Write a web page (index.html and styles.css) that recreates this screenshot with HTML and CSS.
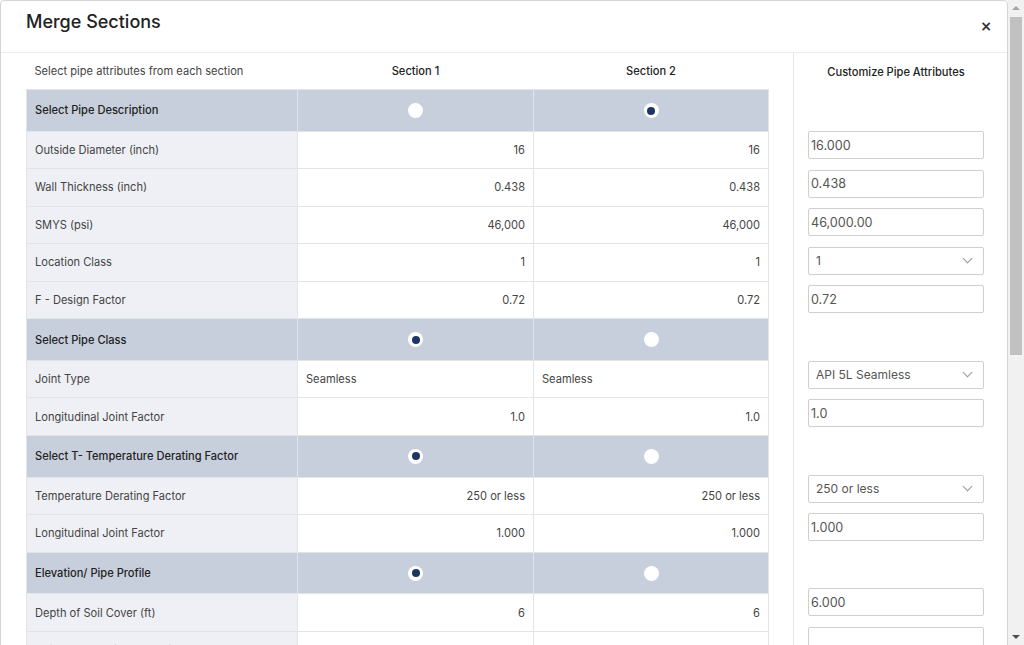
FILE: index.html
```html
<!DOCTYPE html>
<html lang="en">

<head>
    <meta charset="UTF-8">
    <meta name="viewport" content="width=device-width, initial-scale=1.0">
    <title>Merge Sections</title>
    <link rel="stylesheet" href="styles.css">
</head>

<body>

    <div class="modal">
        <div class="modal-header">
            <h2>Merge Sections</h2>
            <span class="close-modal">&times;</span>
        </div>

        <div class="modal-body">
            <div class="sections">
                <table class="merge-table">
                    <thead>
                        <tr>
                            <th class="caption">Select pipe attributes from each section</th>
                            <th class="sec">Section 1</th>
                            <th>Section 2</th>
                        </tr>
                    </thead>
                    <tbody>
                        <tr class="group">
                            <td>Select Pipe Description</td>
                            <td><span class="radio"></span></td>
                            <td><span class="radio checked"></span></td>
                        </tr>
                        <tr>
                            <td>Outside Diameter (inch)</td>
                            <td class="num">16</td>
                            <td class="num">16</td>
                        </tr>
                        <tr>
                            <td>Wall Thickness (inch)</td>
                            <td class="num">0.438</td>
                            <td class="num">0.438</td>
                        </tr>
                        <tr>
                            <td>SMYS (psi)</td>
                            <td class="num">46,000</td>
                            <td class="num">46,000</td>
                        </tr>
                        <tr>
                            <td>Location Class</td>
                            <td class="num">1</td>
                            <td class="num">1</td>
                        </tr>
                        <tr>
                            <td>F - Design Factor</td>
                            <td class="num">0.72</td>
                            <td class="num">0.72</td>
                        </tr>
                        <tr class="group">
                            <td>Select Pipe Class</td>
                            <td><span class="radio checked"></span></td>
                            <td><span class="radio"></span></td>
                        </tr>
                        <tr>
                            <td>Joint Type</td>
                            <td>Seamless</td>
                            <td>Seamless</td>
                        </tr>
                        <tr>
                            <td>Longitudinal Joint Factor</td>
                            <td class="num">1.0</td>
                            <td class="num">1.0</td>
                        </tr>
                        <tr class="group">
                            <td>Select T- Temperature Derating Factor</td>
                            <td><span class="radio checked"></span></td>
                            <td><span class="radio"></span></td>
                        </tr>
                        <tr>
                            <td>Temperature Derating Factor</td>
                            <td class="num">250 or less</td>
                            <td class="num">250 or less</td>
                        </tr>
                        <tr>
                            <td>Longitudinal Joint Factor</td>
                            <td class="num">1.000</td>
                            <td class="num">1.000</td>
                        </tr>
                        <tr class="group">
                            <td>Elevation/ Pipe Profile</td>
                            <td><span class="radio checked"></span></td>
                            <td><span class="radio"></span></td>
                        </tr>
                        <tr>
                            <td>Depth of Soil Cover (ft)</td>
                            <td class="num">6</td>
                            <td class="num">6</td>
                        </tr>
                        <tr>
                            <td>Height of Terrain above Pipe Center (ft)</td>
                            <td class="num">0</td>
                            <td class="num">0</td>
                        </tr>
                        <tr>
                            <td>Elevation Change (ft)</td>
                            <td class="num">0</td>
                            <td class="num">0</td>
                        </tr>
                        <tr class="group">
                            <td>Select Coating</td>
                            <td><span class="radio checked"></span></td>
                            <td><span class="radio"></span></td>
                        </tr>
                        <tr>
                            <td>Coating Type</td>
                            <td>FBE</td>
                            <td>FBE</td>
                        </tr>
                        <tr>
                            <td>Coating Thickness (mil)</td>
                            <td class="num">14</td>
                            <td class="num">14</td>
                        </tr>
                        <tr>
                            <td>Year Installed</td>
                            <td class="num">1998</td>
                            <td class="num">1998</td>
                        </tr>
                    </tbody>
                </table>
            </div>

            <div class="custom">
                <div class="custom-title">Customize Pipe Attributes</div>

                <div class="field first"><input type="text" value="16.000"></div>
                <div class="field"><input type="text" value="0.438"></div>
                <div class="field"><input type="text" value="46,000.00"></div>
                <div class="field select"><select><option>1</option></select></div>
                <div class="field"><input type="text" value="0.72"></div>

                <div class="field select group-start"><select><option>API 5L Seamless</option></select></div>
                <div class="field"><input type="text" value="1.0"></div>

                <div class="field select group-start"><select><option>250 or less</option></select></div>
                <div class="field"><input type="text" value="1.000"></div>

                <div class="field group-start"><input type="text" value="6.000"></div>
                <div class="field"><input type="text" value=""></div>
                <div class="field"><input type="text" value=""></div>

                <div class="field select group-start"><select><option>FBE</option></select></div>
                <div class="field"><input type="text" value="14"></div>
                <div class="field"><input type="text" value="1998"></div>
            </div>
        </div>
    </div>

    <!-- page scrollbar, drawn since the headless window hides it -->
    <div class="scrollbar">
        <span class="arrow-up"></span>
        <span class="thumb"></span>
        <span class="arrow-down"></span>
    </div>

</body>

</html>
```

FILE: styles.css
```css
body {
    margin: 0;
    padding-right: 16px;
    font-family: Inter, "Noto Sans", Arial, sans-serif;
    color: #333;
    background: #fff;
}

.modal {
    border: 1px solid #d4d4d4;
    border-radius: 4px;
    background: #fff;
}

.modal-header {
    height: 51px;
    display: flex;
    justify-content: space-between;
    align-items: flex-start;
    padding: 0 15px 0 25px;
    border-bottom: 1px solid #ececec;
}

.modal-header h2 {
    margin: 9px 0 0;
    font-size: 18px;
    line-height: 24px;
    font-weight: 500;
    color: #222;
}

.close-modal {
    margin-top: 16px;
    font-family: "DejaVu Sans", sans-serif;
    font-size: 14px;
    line-height: 18px;
    font-weight: bold;
    color: #333;
    cursor: pointer;
}

.modal-body {
    display: flex;
}

.sections {
    width: 743px;
    padding: 0 24px 20px 25px;
}

.merge-table {
    width: 743px;
    border-collapse: collapse;
    table-layout: fixed;
    font-size: 11.1px;
    color: #444;
}

.merge-table th {
    height: 36px;
    font-weight: 500;
    color: #222;
    text-align: center;
    padding: 0;
}

.merge-table th.caption {
    width: 263px;
    font-weight: 400;
    color: #444;
    text-align: left;
    padding-left: 8px;
}

.merge-table th.sec {
    width: 236px;
}

.merge-table td {
    height: 36.5px;
    padding: 0 8px;
    border: 1px solid #e2e4e8;
    background: #fff;
    vertical-align: middle;
}

.merge-table td:first-child {
    background: #eef0f5;
}

.merge-table td.num {
    text-align: right;
}

.merge-table tr.group td {
    height: 40.7px;
    background: #c8cfdc;
    color: #222;
    font-weight: 500;
    text-align: center;
}

.merge-table tr.group td:first-child {
    text-align: left;
}

.radio {
    display: inline-block;
    width: 15px;
    height: 15px;
    border-radius: 50%;
    background: #fff;
    vertical-align: middle;
    position: relative;
}

.radio.checked::after {
    content: "";
    position: absolute;
    top: 3.5px;
    left: 3.5px;
    width: 8px;
    height: 8px;
    border-radius: 50%;
    background: #1e3563;
}

.custom {
    flex: 1;
    padding: 0 0 20px 14px;
    border-left: 1px solid #e6e6e6;
}

.custom-title {
    width: 176px;
    height: 37px;
    line-height: 39px;
    font-size: 11.1px;
    font-weight: 500;
    color: #222;
    text-align: center;
}

.field {
    margin-bottom: 10.6px;
    position: relative;
    width: 176px;
}

.field.first {
    margin-top: 41px;
}

.field.group-start {
    margin-top: 47.3px;
}

.field input,
.field select {
    box-sizing: border-box;
    width: 176px;
    height: 28px;
    border: 1px solid #cfcfcf;
    border-radius: 2px;
    padding: 0 2px;
    font-family: inherit;
    font-size: 12.6px;
    color: #555;
    background: #fff;
    outline: none;
}

.field select {
    padding: 0 7px;
    font-size: 12px;
    appearance: none;
    -webkit-appearance: none;
}

.field.select::after {
    content: "";
    position: absolute;
    right: 13px;
    top: 8px;
    width: 6px;
    height: 6px;
    border-right: 1px solid #999;
    border-bottom: 1px solid #999;
    transform: rotate(45deg);
    pointer-events: none;
}

.scrollbar {
    position: fixed;
    top: 0;
    right: 0;
    width: 16px;
    height: 100vh;
    background: #f1f1f1;
}

.thumb {
    position: absolute;
    top: 17px;
    left: 2px;
    width: 12px;
    height: 338px;
    background: #c1c1c1;
}

.arrow-up,
.arrow-down {
    position: absolute;
    left: 4px;
    width: 0;
    height: 0;
    border-left: 4px solid transparent;
    border-right: 4px solid transparent;
}

.arrow-up {
    top: 6px;
    border-bottom: 4px solid #a3a3a3;
}

.arrow-down {
    bottom: 6px;
    border-top: 4px solid #505050;
}
```
